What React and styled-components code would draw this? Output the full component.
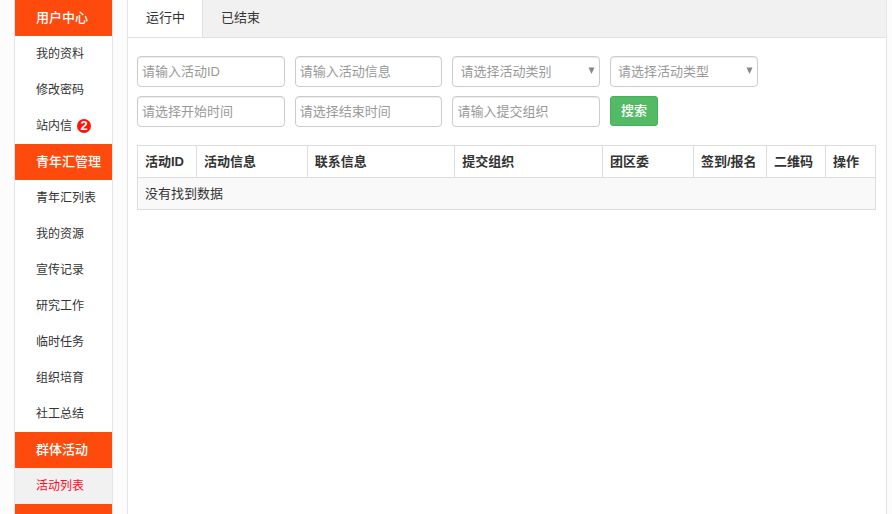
import React from "react";
import styled, { createGlobalStyle } from "styled-components";

const GlobalStyle = createGlobalStyle`
  * {
    box-sizing: border-box;
  }
  body {
    margin: 0;
    background: #fcfcfc;
    color: #333;
    font-family: "Liberation Sans", "Noto Sans CJK SC", sans-serif;
    font-size: 13px;
    line-height: 18px;
  }
  input, select, button {
    font-family: inherit;
    font-size: 13px;
  }
`;

const Page = styled.div`
  display: flex;
  height: 100vh;
  padding: 0 5px 0 14px;
  overflow: hidden;
`;

const Sidebar = styled.nav`
  display: flex;
  flex-direction: column;
  flex: 0 0 99px;
  margin-right: 14px;
  border: solid #e5e5e5;
  border-width: 0 1px;
  background: #fff;
`;

const MenuTitle = styled.h2`
  flex: none;
  height: 36px;
  margin: 0;
  padding-left: 21px;
  background: #ff4a0e;
  color: #fff;
  font-size: 13px;
  font-weight: 500;
  line-height: 35px;
  white-space: nowrap;
`;

const MenuList = styled.ul`
  flex: none;
  margin: 0;
  padding: 0;
  list-style: none;
`;

const MenuLink = styled.a`
  display: flex;
  align-items: center;
  height: 36px;
  padding-left: 21px;
  background: ${(props) => (props.$active ? "#f1f1f1" : "#fff")};
  color: ${(props) => (props.$active ? "#ff0a1e" : "#333")};
  font-size: 12px;
  text-decoration: none;
  white-space: nowrap;
`;

const Badge = styled.span`
  width: 14px;
  height: 14px;
  margin-left: 5px;
  border-radius: 50%;
  background: #ff1405;
  color: #fff;
  font-size: 13px;
  font-weight: bold;
  line-height: 14px;
  text-align: center;
`;

const MenuEnd = styled.div`
  flex: 1;
  background: #ff4a0e;
`;

const Main = styled.main`
  flex: 1;
  min-width: 0;
  border: solid #e5e5e5;
  border-width: 0 1px;
  background: #fff;
`;

const Tabs = styled.div`
  display: flex;
  height: 38px;
  border-bottom: 1px solid #e2e2e2;
  background: #f1f1f1;
`;

const Tab = styled.button`
  padding: 0 17px 4px 18px;
  border: 0;
  border-right: 1px solid ${(props) => (props.$active ? "#e2e2e2" : "transparent")};
  background: ${(props) => (props.$active ? "#fff" : "transparent")};
  color: #333;
  cursor: pointer;
`;

const Content = styled.div`
  padding: 18px 10px 18px 9px;
`;

const SearchForm = styled.form`
  display: grid;
  grid-template-columns: repeat(4, 1fr);
  gap: 9px 10px;
  width: 84%;
  margin-bottom: 18px;
`;

const Input = styled.input`
  width: 100%;
  height: 31px;
  padding: 0 4px;
  border: 1px solid #ccc;
  border-radius: 4px;
  background: #fff;
  box-shadow: inset 0 1px 1px rgba(0, 0, 0, 0.075);
  color: #555;
  &::placeholder {
    color: #999;
    opacity: 1;
  }
`;

const SelectBox = styled.div`
  position: relative;
  svg {
    position: absolute;
    top: 11px;
    right: 5px;
    pointer-events: none;
  }
`;

const Select = styled.select`
  width: 100%;
  height: 31px;
  padding: 0 20px 0 7px;
  border: 1px solid #ccc;
  border-radius: 4px;
  appearance: none;
  background: #fff;
  box-shadow: inset 0 1px 1px rgba(0, 0, 0, 0.075);
  color: #999;
`;

const SearchButton = styled.button`
  justify-self: start;
  height: 30px;
  padding: 0 10px 4px;
  border: 1px solid #45b058;
  border-radius: 3px;
  background: #53bb66;
  color: #fff;
  font-weight: 500;
  cursor: pointer;
`;

const Table = styled.table`
  width: 100%;
  border-collapse: collapse;
  table-layout: fixed;
  th, td {
    height: 32px;
    padding: 0 7px;
    border: 1px solid #ddd;
    text-align: left;
    white-space: nowrap;
  }
  td {
    background: #f9f9f9;
  }
`;

const Th = styled.th`
  width: ${(props) => props.$width};
`;

const menu = [
  {
    title: "用户中心",
    items: [{ name: "我的资料" }, { name: "修改密码" }, { name: "站内信", count: 2 }],
  },
  {
    title: "青年汇管理",
    items: [
      { name: "青年汇列表" },
      { name: "我的资源" },
      { name: "宣传记录" },
      { name: "研究工作" },
      { name: "临时任务" },
      { name: "组织培育" },
      { name: "社工总结" },
    ],
  },
  {
    title: "群体活动",
    items: [{ name: "活动列表", active: true }],
  },
];

const columns = [
  { name: "活动ID", width: "8%" },
  { name: "活动信息", width: "15%" },
  { name: "联系信息", width: "20%" },
  { name: "提交组织", width: "20%" },
  { name: "团区委", width: "91px" },
  { name: "签到/报名", width: "73px" },
  { name: "二维码", width: "59px" },
  { name: "操作", width: "auto" },
];

const Field = ({ label }) => <Input type="text" aria-label={label} placeholder={label} />;

const Dropdown = ({ label }) => (
  <SelectBox>
    <Select aria-label={label}>
      <option>{label}</option>
    </Select>
    <svg width="7" height="7" viewBox="0 0 7 7" aria-hidden="true">
      <path d="M0.5 0.5H6.5L3.5 7Z" fill="#888" />
    </svg>
  </SelectBox>
);

const App = () => {
  return (
    <>
      <GlobalStyle />
      <Page>
        <Sidebar>
          {menu.map((group) => (
            <React.Fragment key={group.title}>
              <MenuTitle>{group.title}</MenuTitle>
              <MenuList>
                {group.items.map((item) => (
                  <li key={item.name}>
                    <MenuLink href="#" $active={item.active}>
                      {item.name}
                      {item.count && <Badge>{item.count}</Badge>}
                    </MenuLink>
                  </li>
                ))}
              </MenuList>
            </React.Fragment>
          ))}
          <MenuEnd />
        </Sidebar>
        <Main>
          <Tabs>
            <Tab type="button" $active>运行中</Tab>
            <Tab type="button">已结束</Tab>
          </Tabs>
          <Content>
            <SearchForm>
              <Field label="请输入活动ID" />
              <Field label="请输入活动信息" />
              <Dropdown label="请选择活动类别" />
              <Dropdown label="请选择活动类型" />
              <Field label="请选择开始时间" />
              <Field label="请选择结束时间" />
              <Field label="请输入提交组织" />
              <SearchButton type="button">搜索</SearchButton>
            </SearchForm>
            <Table>
              <thead>
                <tr>
                  {columns.map((col) => (
                    <Th key={col.name} $width={col.width}>{col.name}</Th>
                  ))}
                </tr>
              </thead>
              <tbody>
                <tr>
                  <td colSpan={columns.length}>没有找到数据</td>
                </tr>
              </tbody>
            </Table>
          </Content>
        </Main>
      </Page>
    </>
  );
};

export default App;
